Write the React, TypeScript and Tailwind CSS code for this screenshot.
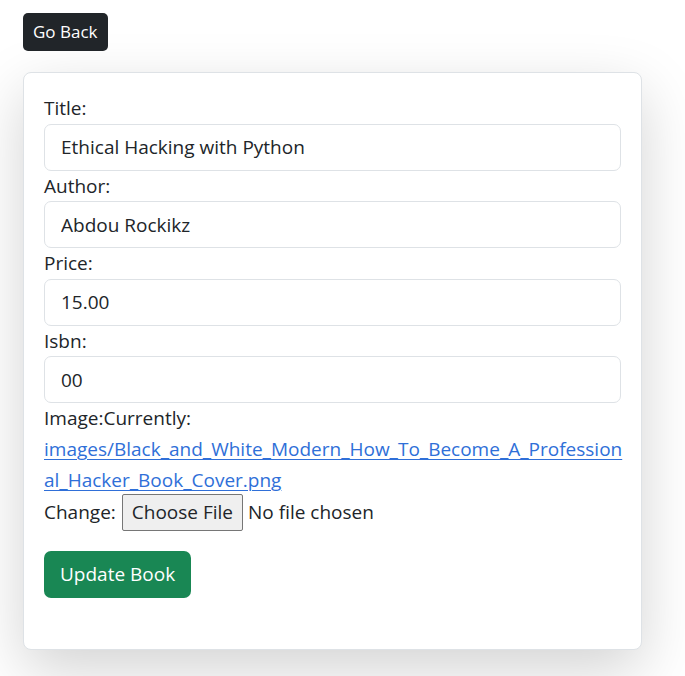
export default function App() {
  const fields = [
    { label: 'Title:', value: 'Ethical Hacking with Python' },
    { label: 'Author:', value: 'Abdou Rockikz' },
    { label: 'Price:', value: '15.00' },
    { label: 'Isbn:', value: '00' },
  ]

  return (
    <div className="min-h-screen bg-white px-[23px] pt-[13px] text-[#212529] font-['Open_Sans',sans-serif]">
      <button className="h-[38px] rounded-[5px] bg-[#212529] px-[10px] text-[17px] leading-[26px] text-white">Go Back</button>

      <div className="mt-[21px] w-[619px] rounded-[8px] border border-[#dee2e6] bg-white px-[20px] pt-[20px] pb-[51px] shadow-[0_20px_60px_rgba(0,0,0,0.175)]">
        <form className="flex flex-col text-[19px]">
          {fields.map((f) => (
            <div key={f.label} className="flex flex-col">
              <label className="h-[30.5px] leading-[30.5px]">{f.label}</label>
              <input
                readOnly
                value={f.value}
                className="h-[47px] w-full rounded-[7px] border border-[#dee2e6] bg-white px-[16px] text-[19px] text-[#212529] outline-none"
              />
            </div>
          ))}

          <div className="leading-[31px]">Image:Currently:</div>
          <a href="#" className="block leading-[31px] text-[#2f6fd8] underline decoration-[1px] underline-offset-[3px]">
            images/Black_and_White_Modern_How_To_Become_A_Profession
            <br />
            al_Hacker_Book_Cover.png
          </a>
          <div className="-mt-[2px] flex h-[37px] items-center">
            <span>Change:</span>
            <span className="ml-[6px] flex h-[37px] items-center rounded-[2px] border border-[#767676] bg-[#efefef] px-[9px]">Choose File</span>
            <span className="ml-[5px]">No file chosen</span>
          </div>

          <div className="mt-[20px]">
            <button type="button" className="h-[47px] rounded-[7px] bg-[#198754] px-[16px] text-[19px] text-white">Update Book</button>
          </div>
        </form>
      </div>
    </div>
  )
}
